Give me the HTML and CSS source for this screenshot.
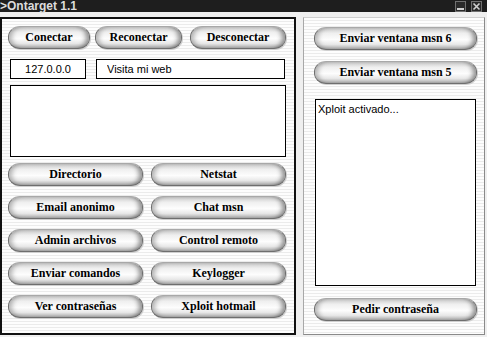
FILE: index.html
```html
<!DOCTYPE html>
<html lang="es">
<head>
    <meta charset="UTF-8">
    <title>Ontarget 1.1</title>
    <link rel="stylesheet" href="styles.css">
</head>
<body>
    <div class="window">
        <div class="titlebar">
            <span class="title">&gt;Ontarget 1.1</span>
            <div class="controls">
                <span class="ctl">
                    <svg width="9" height="9" viewBox="0 0 9 9"><rect x="1" y="6" width="7" height="2" fill="#d0d0d0"/></svg>
                </span>
                <span class="ctl">
                    <svg width="9" height="9" viewBox="0 0 9 9"><path d="M1.5 1.5 L7.5 7.5 M7.5 1.5 L1.5 7.5" stroke="#d0d0d0" stroke-width="1.6"/></svg>
                </span>
            </div>
        </div>

        <div class="main">
            <div class="panel left">
                <div class="toprow">
                    <button class="btn w-con">Conectar</button>
                    <button class="btn w-rec">Reconectar</button>
                    <button class="btn w-des">Desconectar</button>
                </div>
                <div class="inputs">
                    <input class="field ip" type="text" value="127.0.0.0">
                    <input class="field web" type="text" value="Visita mi web">
                </div>
                <textarea class="log big"></textarea>
                <div class="grid">
                    <button class="btn">Directorio</button>
                    <button class="btn">Netstat</button>
                    <button class="btn">Email anonimo</button>
                    <button class="btn">Chat msn</button>
                    <button class="btn">Admin archivos</button>
                    <button class="btn">Control remoto</button>
                    <button class="btn">Enviar comandos</button>
                    <button class="btn">Keylogger</button>
                    <button class="btn">Ver contraseñas</button>
                    <button class="btn">Xploit hotmail</button>
                </div>
            </div>

            <div class="panel right">
                <button class="btn">Enviar ventana msn 6</button>
                <button class="btn">Enviar ventana msn 5</button>
                <textarea class="log status">Xploit activado...</textarea>
                <button class="btn last">Pedir contraseña</button>
            </div>
        </div>
    </div>
</body>
</html>
```

FILE: styles.css
```css
body {
    margin: 0;
    background: #efefef;
}
.window {
    width: 487px;
    height: 337px;
    overflow: hidden;
    background: #efefef;
}
.titlebar {
    height: 12px;
    background: #1e1e1e;
    display: flex;
    align-items: center;
    justify-content: space-between;
}
.title {
    font-family: 'Liberation Sans', Arial, sans-serif;
    font-weight: bold;
    font-size: 12px;
    line-height: 12px;
    color: #dcdcdc;
}
.controls {
    display: flex;
    gap: 5px;
    padding-right: 5px;
}
.ctl {
    width: 9px;
    height: 9px;
    border: 1px solid #707070;
    background: #2a2a2a;
    display: flex;
}
.main {
    display: flex;
    gap: 7px;
    padding-top: 5px;
}
.panel {
    box-sizing: border-box;
    height: 318px;
    background: repeating-linear-gradient(to bottom, #fdfdfd 0 2px, #ebebeb 2px 3px);
}
.left {
    width: 296px;
    border: 2px solid #111;
    padding: 7px 8px 0 6px;
}
.right {
    width: 182px;
    border: 1px solid #a8a8a8;
    border-top-color: #d0d0d0;
    border-right-color: #8a8a8a;
    border-bottom-color: #8a8a8a;
    padding: 9px 7px 0 10px;
    display: flex;
    flex-direction: column;
}
.btn {
    box-sizing: border-box;
    height: 23px;
    padding: 0;
    font-family: 'Liberation Serif', 'Times New Roman', serif;
    font-weight: bold;
    font-size: 12px;
    color: #000;
    border: 1px solid #6e6e6e;
    border-top-color: #a8a8a8;
    border-radius: 12px / 11px;
    background: linear-gradient(#c8c8c8, #efefef 25%, #fdfdfd 55%, #e8e8e8 78%, #ababab);
    box-shadow: inset 6px 0 5px -3px rgba(0, 0, 0, 0.28), inset -6px 0 5px -3px rgba(0, 0, 0, 0.42), 1px 1px 0 #cfcfcf;
}
.toprow {
    display: flex;
}
.w-con { width: 82px; }
.w-rec { width: 87px; margin-left: 5px; }
.w-des { width: 96px; margin-left: 8px; }
.inputs {
    display: flex;
    margin-top: 10px;
    padding-left: 2px;
}
.field {
    box-sizing: border-box;
    height: 20px;
    border: 1px solid #000;
    background: #fff;
    font-family: 'Liberation Sans', Arial, sans-serif;
    font-size: 11px;
    color: #000;
    margin: 0;
    outline: none;
}
.ip {
    width: 76px;
    text-align: center;
}
.web {
    width: 189px;
    margin-left: 10px;
    padding-left: 10px;
}
.log {
    display: block;
    box-sizing: border-box;
    border: 1px solid #000;
    background: #fff;
    font-family: 'Liberation Sans', Arial, sans-serif;
    font-size: 11px;
    resize: none;
    margin: 0;
    outline: none;
}
.big {
    width: 276px;
    height: 72px;
    margin: 6px 0 6px 2px;
}
.grid {
    display: grid;
    grid-template-columns: 135px 135px;
    column-gap: 8px;
    row-gap: 10px;
}
.right .btn {
    width: 163px;
    flex: none;
}
.right .btn + .btn {
    margin-top: 11px;
}
.status {
    width: 161px;
    height: 187px;
    margin: 15px 0 0 1px;
    padding: 3px 2px;
}
.right .last {
    margin-top: 12px;
}
```
